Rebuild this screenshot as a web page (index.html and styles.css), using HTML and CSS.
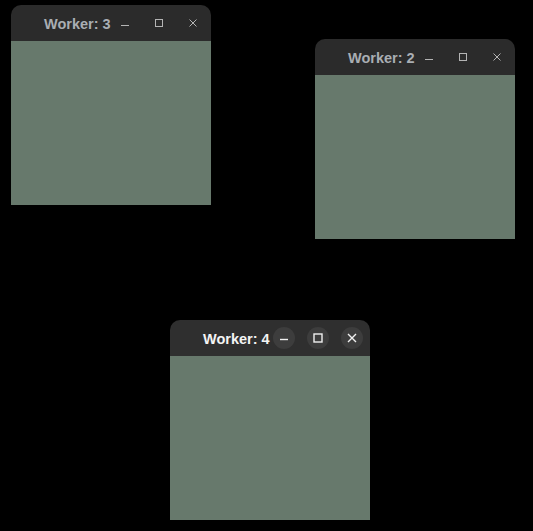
FILE: index.html
```html
<!DOCTYPE html>
<html>
<head>
<meta charset="utf-8">
<link rel="stylesheet" href="styles.css">
</head>
<body>
<div class="desktop">
  <div class="window w3">
    <div class="titlebar">
      <span class="title">Worker: 3</span>
      <div class="controls">
        <span class="btn"><svg width="10" height="10" viewBox="0 0 10 10"><path d="M1 7.5H9" /></svg></span>
        <span class="btn"><svg width="10" height="10" viewBox="0 0 10 10"><rect x="1.5" y="1.5" width="7" height="7" /></svg></span>
        <span class="btn"><svg width="10" height="10" viewBox="0 0 10 10"><path d="M1.5 1.5L8.5 8.5M8.5 1.5L1.5 8.5" /></svg></span>
      </div>
    </div>
    <div class="content"></div>
  </div>

  <div class="window w2">
    <div class="titlebar">
      <span class="title">Worker: 2</span>
      <div class="controls">
        <span class="btn"><svg width="10" height="10" viewBox="0 0 10 10"><path d="M1 7.5H9" /></svg></span>
        <span class="btn"><svg width="10" height="10" viewBox="0 0 10 10"><rect x="1.5" y="1.5" width="7" height="7" /></svg></span>
        <span class="btn"><svg width="10" height="10" viewBox="0 0 10 10"><path d="M1.5 1.5L8.5 8.5M8.5 1.5L1.5 8.5" /></svg></span>
      </div>
    </div>
    <div class="content"></div>
  </div>

  <div class="window w4 active">
    <div class="titlebar">
      <span class="title">Worker: 4</span>
      <div class="controls">
        <span class="btn"><svg width="10" height="10" viewBox="0 0 10 10"><path d="M1 6.5H9" /></svg></span>
        <span class="btn"><svg width="10" height="10" viewBox="0 0 10 10"><rect x="1" y="1" width="8" height="8" /></svg></span>
        <span class="btn"><svg width="10" height="10" viewBox="0 0 10 10"><path d="M1 1L9 9M9 1L1 9" /></svg></span>
      </div>
    </div>
    <div class="content"></div>
  </div>
</div>
</body>
</html>
```

FILE: styles.css
```css
html, body {
  margin: 0;
  padding: 0;
  background: #000;
}

.desktop {
  position: relative;
  width: 533px;
  height: 531px;
  background: #000;
  overflow: hidden;
}

.window {
  position: absolute;
  width: 200px;
  display: flex;
  flex-direction: column;
}

.w3 { left: 11px; top: 5px; }
.w2 { left: 315px; top: 39px; }
.w4 { left: 170px; top: 320px; }

.titlebar {
  height: 36px;
  background: #2b2b2b;
  border-radius: 10px 10px 0 0;
  display: flex;
  align-items: center;
  padding-left: 33px;
  padding-right: 7px;
  box-sizing: border-box;
}

.active .titlebar {
  background: #2f2f2f;
}

.title {
  font-family: "Liberation Sans", Arial, sans-serif;
  font-weight: bold;
  font-size: 14.5px;
  color: #a9aeb3;
  white-space: nowrap;
  flex: 1;
  padding-top: 2px;
}

.active .title {
  color: #f4f4f4;
}

.controls {
  display: flex;
  gap: 12px;
}

.btn {
  width: 22px;
  height: 22px;
  border-radius: 50%;
  display: flex;
  align-items: center;
  justify-content: center;
}

.btn svg {
  fill: none;
  stroke: #b4b4b4;
  stroke-width: 1;
}

.active .btn {
  background: #3d3d3d;
}

.active .btn svg {
  stroke: #f0f0f0;
  stroke-width: 1.4;
}

.content {
  height: 164px;
  background: #67796c;
}
```
